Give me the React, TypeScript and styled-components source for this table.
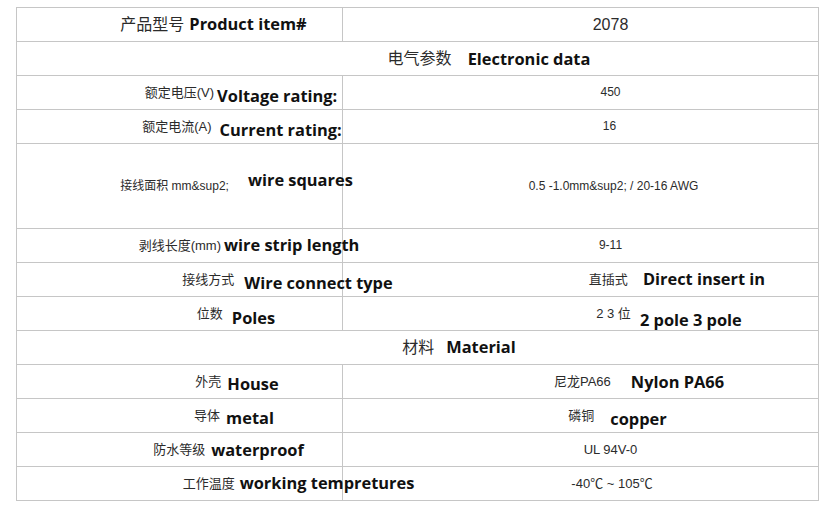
import React from "react";
import styled, { createGlobalStyle } from "styled-components";

const GlobalStyle = createGlobalStyle`
  body {
    margin: 0;
    background: #fff;
  }
`;

const line = "#c6c6c6";

const Page = styled.main`
  padding: 7px 0 0 16px;
`;

const Sheet = styled.section`
  width: 803px;
  box-sizing: border-box;
  border-top: 1px solid ${line};
  border-left: 1px solid ${line};
  font-family: "Liberation Sans", "Noto Sans CJK SC", sans-serif;
  color: #2b2b2b;
`;

const Row = styled.div<{ $tall?: boolean }>`
  display: grid;
  grid-template-columns: 326px 476px;
  height: ${(p) => (p.$tall ? 85 : 34)}px;
  box-sizing: border-box;
  border-bottom: 1px solid ${line};
  overflow: hidden;
`;

const Cell = styled.div<{ $shift: number; $gap: number; $span?: boolean }>`
  grid-column: ${(p) => (p.$span ? "1 / -1" : "auto")};
  display: flex;
  align-items: center;
  justify-content: center;
  gap: ${(p) => p.$gap}px;
  padding-left: ${(p) => Math.max(p.$shift * 2, 0)}px;
  padding-right: ${(p) => Math.max(-p.$shift * 2, 0)}px;
  border-right: 1px solid ${line};
  box-sizing: border-box;
  white-space: nowrap;
  min-width: 0;
`;

const Label = styled.span<{ $size: number }>`
  flex-shrink: 0;
  font-size: ${(p) => p.$size}px;
  line-height: 1.2;
`;

const Term = styled.span<{ $drop: number }>`
  flex-shrink: 0;
  font-family: "Open Sans", "Noto Sans CJK SC", sans-serif;
  font-weight: 700;
  font-size: 16.4px;
  line-height: 1.35;
  color: #111;
  margin-top: ${(p) => Math.max(p.$drop * 2, 0)}px;
  margin-bottom: ${(p) => Math.max(-p.$drop * 2, 0)}px;
`;

type Part = {
  cn: string;
  en?: string;
  size: number;
  shift: number;
  gap?: number;
  drop?: number;
};

type Line = { left?: Part; right?: Part; span?: Part; tall?: boolean };

const rows: Line[] = [
  {
    left: { cn: "产品型号", en: "Product item#", size: 16, shift: 34, gap: 5 },
    right: { cn: "2078", size: 16, shift: 30 },
  },
  { span: { cn: "电气参数", en: "Electronic data", size: 16, shift: 71.5, gap: 16, drop: 1 } },
  {
    left: { cn: "额定电压(V)", en: "Voltage rating:", size: 13, shift: 61.5, gap: 3, drop: 4 },
    right: { cn: "450", size: 12, shift: 30 },
  },
  {
    left: { cn: "额定电流(A)", en: "Current rating:", size: 13, shift: 62.5, gap: 8, drop: 4 },
    right: { cn: "16", size: 12, shift: 29 },
  },
  {
    tall: true,
    left: { cn: "接线面积 mm&sup2;", en: "wire squares", size: 12, shift: 57, gap: 19, drop: -6 },
    right: { cn: "0.5 -1.0mm&sup2; / 20-16 AWG", size: 12, shift: 33 },
  },
  {
    left: { cn: "剥线长度(mm)", en: "wire strip length", size: 13, shift: 69.5, gap: 3 },
    right: { cn: "9-11", size: 12, shift: 30 },
  },
  {
    left: { cn: "接线方式", en: "Wire connect type", size: 13, shift: 108, gap: 10, drop: 4 },
    right: { cn: "直插式", en: "Direct insert in", size: 13, shift: 96.5, gap: 15 },
  },
  {
    left: { cn: "位数", en: "Poles", size: 13, shift: 56.5, gap: 9, drop: 4 },
    right: { cn: "2 3 位", en: "2 pole 3 pole", size: 13, shift: 88.5, gap: 9, drop: 6 },
  },
  { span: { cn: "材料", en: "Material", size: 16, shift: 41.5, gap: 12 } },
  {
    left: { cn: "外壳", en: "House", size: 13, shift: 57.5, gap: 6, drop: 3 },
    right: { cn: "尼龙PA66", en: "Nylon PA66", size: 13, shift: 58.5, gap: 20, drop: 1 },
  },
  {
    left: { cn: "导体", en: "metal", size: 13, shift: 54.5, gap: 6, drop: 3 },
    right: { cn: "磷铜", en: "copper", size: 13, shift: 37, gap: 16, drop: 4 },
  },
  {
    left: { cn: "防水等级", en: "waterproof", size: 13, shift: 49, gap: 6, drop: 1 },
    right: { cn: "UL 94V-0", size: 13, shift: 30 },
  },
  {
    left: { cn: "工作温度", en: "working tempretures", size: 13, shift: 119, gap: 5 },
    right: { cn: "-40℃ ~ 105℃", size: 13, shift: 31.5 },
  },
];

function SpecCell({ part, span }: { part: Part; span?: boolean }) {
  return (
    <Cell $shift={part.shift} $gap={part.gap ?? 0} $span={span}>
      <Label $size={part.size}>{part.cn}</Label>
      {part.en && <Term $drop={part.drop ?? 0}>{part.en}</Term>}
    </Cell>
  );
}

export default function App() {
  return (
    <>
      <GlobalStyle />
      <Page>
        <Sheet>
          {rows.map((row, i) => (
            <Row key={i} $tall={row.tall}>
              {row.span ? (
                <SpecCell part={row.span} span />
              ) : (
                <>
                  {row.left && <SpecCell part={row.left} />}
                  {row.right && <SpecCell part={row.right} />}
                </>
              )}
            </Row>
          ))}
        </Sheet>
      </Page>
    </>
  );
}
